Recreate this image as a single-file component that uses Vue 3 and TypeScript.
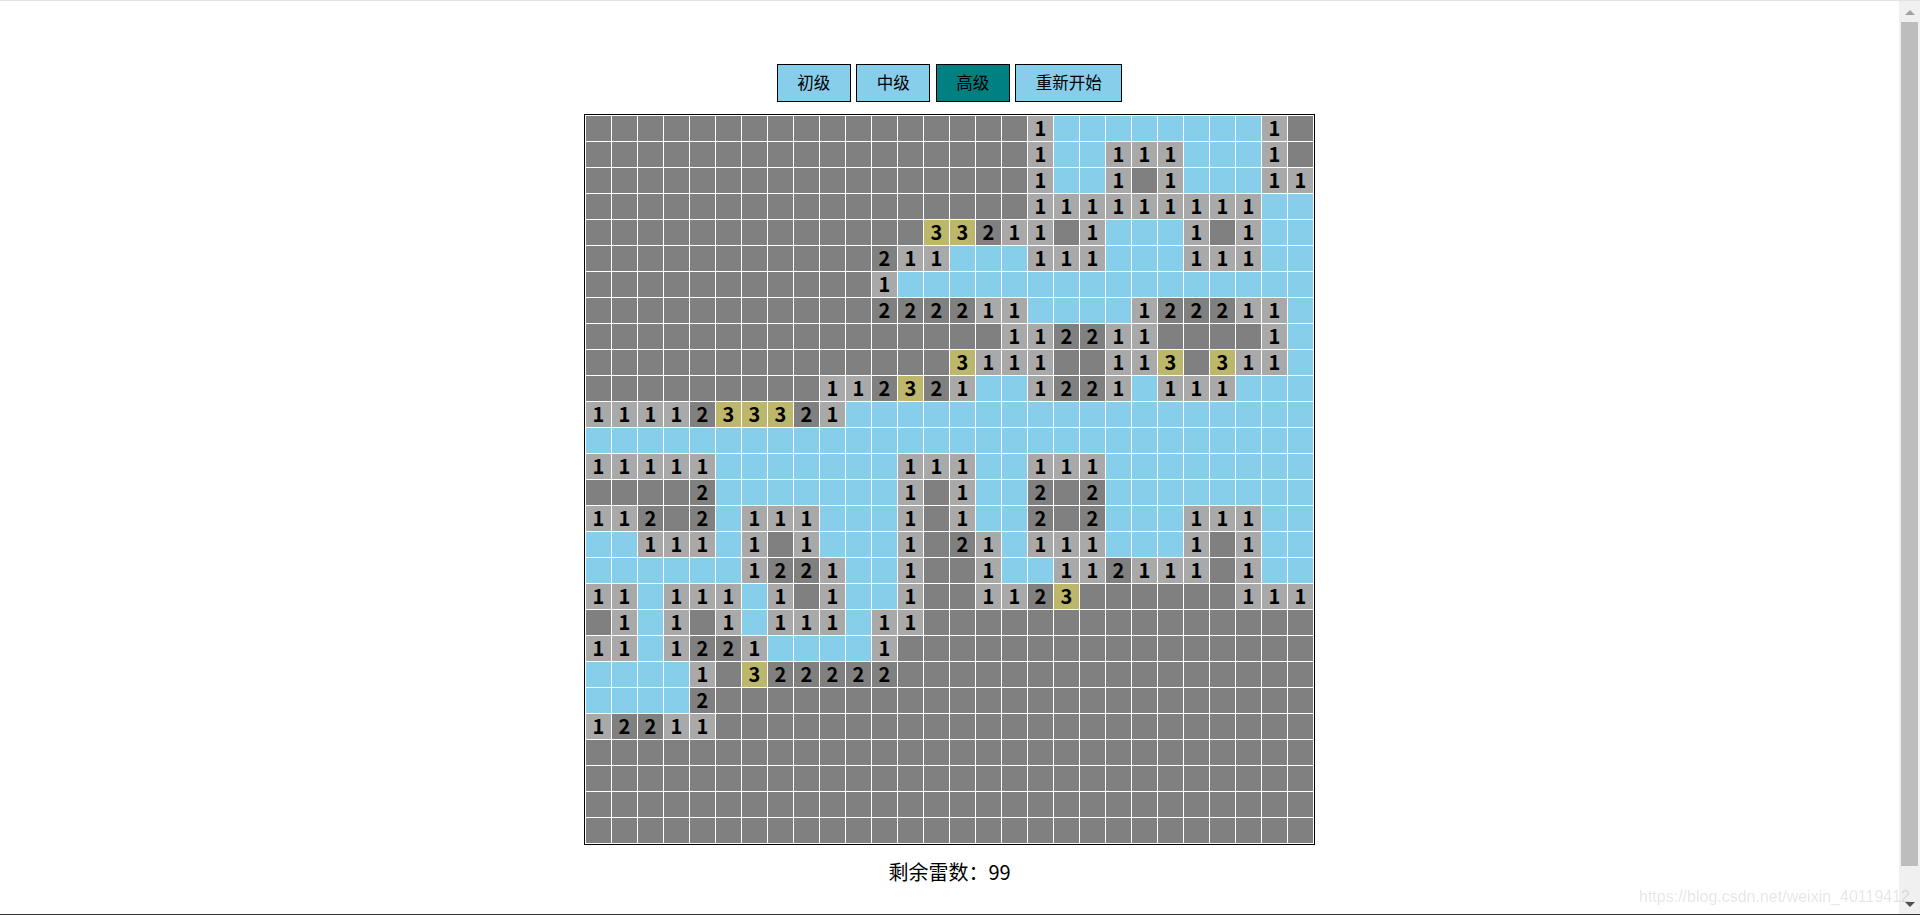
<script setup lang="ts">
import { computed, ref } from 'vue'

type CellKind = 'hidden' | 'open' | 'one' | 'two' | 'three'

interface Cell {
  id: number
  text: string
  kind: CellKind
}

const board: string[] = [
  '.............. ...1________1.',
  '.............. ...1__111___1.',
  '.............. ...1__1.1___11',
  '.............. ...111111111__',
  '.............3 3211.1___1.1__',
  '...........211 ___111___111__',
  '...........1__ ______________',
  '...........222 211____122211_',
  '.............. ..112211....1_',
  '.............. 3111..113.311_',
  '.........11232 1__1221_111___',
  '1111233321____ ______________',
  '______________ ______________',
  '11111_______11 1__111________',
  '....2_______1. 1__2.2________',
  '112.2_111___1. 1__2.2___111__',
  '__111_1.1___1. 21_111___1.1__',
  '______1221__1. .1__112111.1__',
  '11_111_1.1__1. .1123......111',
  '.1_1.1_111_11. ..............',
  '11_1221____1.. ..............',
  '____1.322222.. ..............',
  '____2......... ..............',
  '12211......... ..............',
  '.............. ..............',
  '.............. ..............',
  '.............. ..............',
  '.............. ..............',
]

const levels = ['初级', '中级', '高级', '重新开始']
const activeLevel = ref('高级')
const remaining = ref(99)
const countLabel = '剩余雷数\uFF1A'

const kindOf: Record<string, CellKind> = {
  '.': 'hidden',
  _: 'open',
  '1': 'one',
  '2': 'two',
  '3': 'three',
}

const cells = computed<Cell[]>(() =>
  board.flatMap((row, r) =>
    row
      .replace(' ', '')
      .split('')
      .map((ch, c) => ({
        id: r * 28 + c,
        text: /\d/.test(ch) ? ch : '',
        kind: kindOf[ch],
      })),
  ),
)
</script>

<template>
  <div class="window">
    <main class="page">
      <div class="levels">
        <button
          v-for="level in levels"
          :key="level"
          type="button"
          class="level"
          :class="{ active: level === activeLevel }"
        >{{ level }}</button>
      </div>
      <div class="board">
        <div v-for="cell in cells" :key="cell.id" class="cell" :class="cell.kind">{{ cell.text }}</div>
      </div>
      <p class="count">{{ countLabel }}{{ remaining }}</p>
    </main>
    <aside class="scrollbar">
      <span class="arrow up"></span>
      <span class="thumb"></span>
      <span class="arrow down"></span>
    </aside>
    <span class="watermark">https://blog.csdn.net/weixin_40119412</span>
  </div>
</template>

<style scoped>
.window {
  position: relative;
  display: flex;
  height: 915px;
  box-sizing: border-box;
  border-top: 1px solid #e2e2e2;
  border-bottom: 1px solid #333;
  overflow: hidden;
  background: #fff;
  font-family: "Noto Sans CJK SC", "Noto Sans", sans-serif;
  color: #000;
}
.page {
  flex: 1;
  min-width: 0;
  display: flex;
  flex-direction: column;
  align-items: center;
  padding-top: 63px;
}
.levels {
  display: flex;
  gap: 5.7px;
  margin-bottom: 12px;
}
.level {
  height: 38px;
  padding: 0 19.4px 2px;
  box-sizing: border-box;
  border: 1px solid #000;
  border-radius: 0;
  background: #87ceeb;
  color: #000;
  font: 16.5px/1 "Noto Sans CJK SC", sans-serif;
}
.level.active {
  background: #008080;
}
.board {
  display: grid;
  grid-template-columns: repeat(28, 25px);
  grid-auto-rows: 25px;
  gap: 1px;
  padding: 1px;
  border: 1px solid #000;
  background: #fff;
}
.cell {
  display: flex;
  align-items: center;
  justify-content: center;
  padding-bottom: 2px;
  box-sizing: border-box;
  font-size: 20px;
  font-weight: 700;
  line-height: 1;
}
.hidden, .two { background: #808080; }
.open { background: #87ceeb; }
.one { background: #a9a9a9; }
.three { background: #bdb76b; }
.count {
  margin: 12px 0 0;
  font-size: 20px;
  line-height: 30px;
}
.scrollbar {
  flex: 0 0 21px;
  display: flex;
  flex-direction: column;
  align-items: center;
  background: #f0f0f0;
}
.arrow {
  flex: none;
  width: 0;
  height: 0;
  border-left: 5px solid transparent;
  border-right: 5px solid transparent;
}
.arrow.up {
  margin: 9px 0 7px;
  border-bottom: 5px solid #a3a3a3;
}
.arrow.down {
  margin: 36px 0 0;
  border-top: 5px solid #505050;
}
.thumb {
  width: 17px;
  height: 844px;
  flex: none;
  background: #bdbdbd;
}
.watermark {
  position: absolute;
  left: 1639px;
  top: 886px;
  font: 16px/20px "Liberation Sans", sans-serif;
  color: rgba(0, 0, 0, 0.1);
  white-space: nowrap;
  filter: blur(0.4px);
  pointer-events: none;
}
</style>
